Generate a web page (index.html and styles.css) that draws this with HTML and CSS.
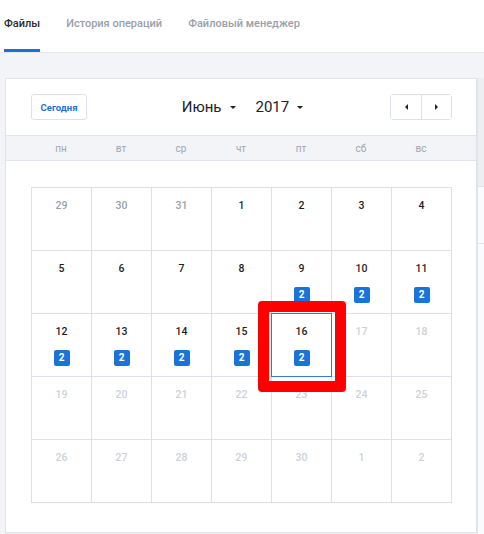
FILE: index.html
```html
<!DOCTYPE html>
<html lang="ru">
<head>
<meta charset="utf-8">
<link rel="stylesheet" href="styles.css">
</head>
<body>
<div class="tabs">
  <div class="tab active">Файлы</div>
  <div class="tab">История операций</div>
  <div class="tab">Файловый менеджер</div>
</div>
<div class="main">
  <div class="card">
    <div class="toolbar">
      <div class="left"><button class="today">Сегодня</button></div>
      <div class="center">
        <span class="sel-drop">Июнь <i class="caret"></i></span>
        <span class="sel-drop">2017 <i class="caret"></i></span>
      </div>
      <div class="right">
        <div class="nav">
          <button class="navbtn"><i class="tri-left"></i></button>
          <button class="navbtn"><i class="tri-right"></i></button>
        </div>
      </div>
    </div>
    <div class="weekdays">
      <span>пн</span><span>вт</span><span>ср</span><span>чт</span><span>пт</span><span>сб</span><span>вс</span>
    </div>
    <div class="body">
      <div class="grid">
        <div class="cell prev"><span class="num">29</span></div>
        <div class="cell prev"><span class="num">30</span></div>
        <div class="cell prev"><span class="num">31</span></div>
        <div class="cell"><span class="num">1</span></div>
        <div class="cell"><span class="num">2</span></div>
        <div class="cell"><span class="num">3</span></div>
        <div class="cell"><span class="num">4</span></div>

        <div class="cell"><span class="num">5</span></div>
        <div class="cell"><span class="num">6</span></div>
        <div class="cell"><span class="num">7</span></div>
        <div class="cell"><span class="num">8</span></div>
        <div class="cell"><span class="num">9</span><span class="badge">2</span></div>
        <div class="cell"><span class="num">10</span><span class="badge">2</span></div>
        <div class="cell"><span class="num">11</span><span class="badge">2</span></div>

        <div class="cell"><span class="num">12</span><span class="badge">2</span></div>
        <div class="cell"><span class="num">13</span><span class="badge">2</span></div>
        <div class="cell"><span class="num">14</span><span class="badge">2</span></div>
        <div class="cell"><span class="num">15</span><span class="badge">2</span></div>
        <div class="cell selected"><span class="num">16</span><span class="badge">2</span><span class="mark"></span></div>
        <div class="cell future"><span class="num">17</span></div>
        <div class="cell future"><span class="num">18</span></div>

        <div class="cell future"><span class="num">19</span></div>
        <div class="cell future"><span class="num">20</span></div>
        <div class="cell future"><span class="num">21</span></div>
        <div class="cell future"><span class="num">22</span></div>
        <div class="cell future"><span class="num">23</span></div>
        <div class="cell future"><span class="num">24</span></div>
        <div class="cell future"><span class="num">25</span></div>

        <div class="cell future"><span class="num">26</span></div>
        <div class="cell future"><span class="num">27</span></div>
        <div class="cell future"><span class="num">28</span></div>
        <div class="cell future"><span class="num">29</span></div>
        <div class="cell future"><span class="num">30</span></div>
        <div class="cell future"><span class="num">1</span></div>
        <div class="cell future"><span class="num">2</span></div>
      </div>
    </div>
  </div>
  <div class="side">
    <div class="side-top"></div>
    <div class="side-body"><div class="side-row"></div></div>
  </div>
</div>
</body>
</html>
```
FILE: styles.css
```css
* { box-sizing: border-box; }
html, body { margin: 0; padding: 0; }
body {
  font-family: Roboto, "Noto Sans", "Liberation Sans", sans-serif;
  background: #fff;
  width: 484px;
  height: 534px;
  overflow: hidden;
}
.tabs {
  display: flex;
  gap: 26px;
  padding-left: 4px;
  height: 53px;
  border-bottom: 1px solid #e4e7ec;
  background: #fff;
}
.tab {
  font-size: 11px;
  font-weight: 500;
  color: #9aa0a8;
  padding-top: 17px;
  height: 52px;
  border-bottom: 3px solid transparent;
}
.tab.active {
  color: #2b2b2b;
  border-bottom-color: #1a6fd8;
}
.main {
  display: flex;
  background: #f3f4f7;
  height: 481px;
  padding: 25px 0 0 5px;
}
.card {
  width: 472px;
  height: 455px;
  background: #fff;
  border: 1px solid #dfe3ea;
  display: flex;
  flex-direction: column;
}
.toolbar {
  display: grid;
  grid-template-columns: 1fr auto 1fr;
  align-items: center;
  height: 57px;
  padding: 0 24px 0 25px;
  border-bottom: 1px solid #e2e5eb;
}
.right { display: flex; justify-content: flex-end; }
.today {
  font-family: inherit;
  width: 56px;
  height: 26px;
  padding: 0;
  background: #fff;
  border: 1px solid #dde1e8;
  border-radius: 3px;
  color: #1f6fd1;
  font-size: 9.5px;
  font-weight: 700;
}
.center {
  display: flex;
  gap: 20px;
  font-size: 15px;
  color: #222;
  margin-left: 2px;
}
.sel-drop { display: flex; align-items: center; gap: 6px; }
.caret {
  display: inline-block;
  width: 0; height: 0;
  border-left: 3px solid transparent;
  border-right: 3px solid transparent;
  border-top: 3px solid #222;
  margin-left: 2px;
}
.nav {
  display: flex;
  border: 1px solid #dde1e8;
  border-radius: 3px;
  height: 26px;
}
.navbtn {
  width: 30px;
  height: 24px;
  padding: 0;
  border: 0;
  background: #fff;
  display: flex;
  align-items: center;
  justify-content: center;
}
.navbtn + .navbtn { border-left: 1px solid #dde1e8; }
.tri-left {
  width: 0; height: 0;
  border-top: 3px solid transparent;
  border-bottom: 3px solid transparent;
  border-right: 3px solid #222;
}
.tri-right {
  width: 0; height: 0;
  border-top: 3px solid transparent;
  border-bottom: 3px solid transparent;
  border-left: 3px solid #222;
}
.weekdays {
  display: grid;
  grid-template-columns: repeat(7, 60px);
  padding: 0 25px;
  height: 25px;
  align-items: center;
  background: #f3f4f7;
  border-bottom: 1px solid #e2e5eb;
  font-size: 10px;
  color: #a0a6b0;
  text-align: center;
}
.body {
  padding: 26px 24px 0 25px;
}
.grid {
  display: grid;
  grid-template-columns: repeat(7, 60px);
  grid-auto-rows: 63px;
  border-top: 1px solid #dce0e7;
  border-left: 1px solid #dce0e7;
  width: 421px;
}
.cell {
  border-right: 1px solid #dce0e7;
  border-bottom: 1px solid #dce0e7;
  display: flex;
  flex-direction: column;
  align-items: center;
  padding-top: 11px;
  position: relative;
}
.num {
  font-size: 10.5px;
  font-weight: 500;
  line-height: 13px;
  color: #1e1e1e;
}
.prev .num { color: #9aa1ab; }
.future .num { color: #cdd1d8; }
.badge {
  margin-top: 12px;
  width: 16px;
  height: 16px;
  border-radius: 2px;
  background: #1a73d6;
  color: #fff;
  font-size: 10px;
  font-weight: 700;
  line-height: 16px;
  text-align: center;
}
.selected::after {
  content: "";
  position: absolute;
  top: -1px; left: -1px; right: -1px; bottom: -1px;
  border: 1px solid #2f7bd6;
}
.mark {
  position: absolute;
  top: -13px;
  left: -14px;
  width: 88px;
  height: 91px;
  border: 11px solid #ff0000;
  border-radius: 4px;
  z-index: 2;
}
.side {
  flex: 1;
  display: flex;
  flex-direction: column;
}
.side-top {
  height: 109px;
  background: #eceef2;
  border-bottom: 1px solid #dfe3ea;
  border-left: 1px solid #e2e5eb;
}
.side-body {
  flex: 1;
  background: #fafbfc;
  border-left: 1px solid #e2e5eb;
}
.side-row {
  height: 57px;
  border-bottom: 1px solid #e2e5eb;
}
```
